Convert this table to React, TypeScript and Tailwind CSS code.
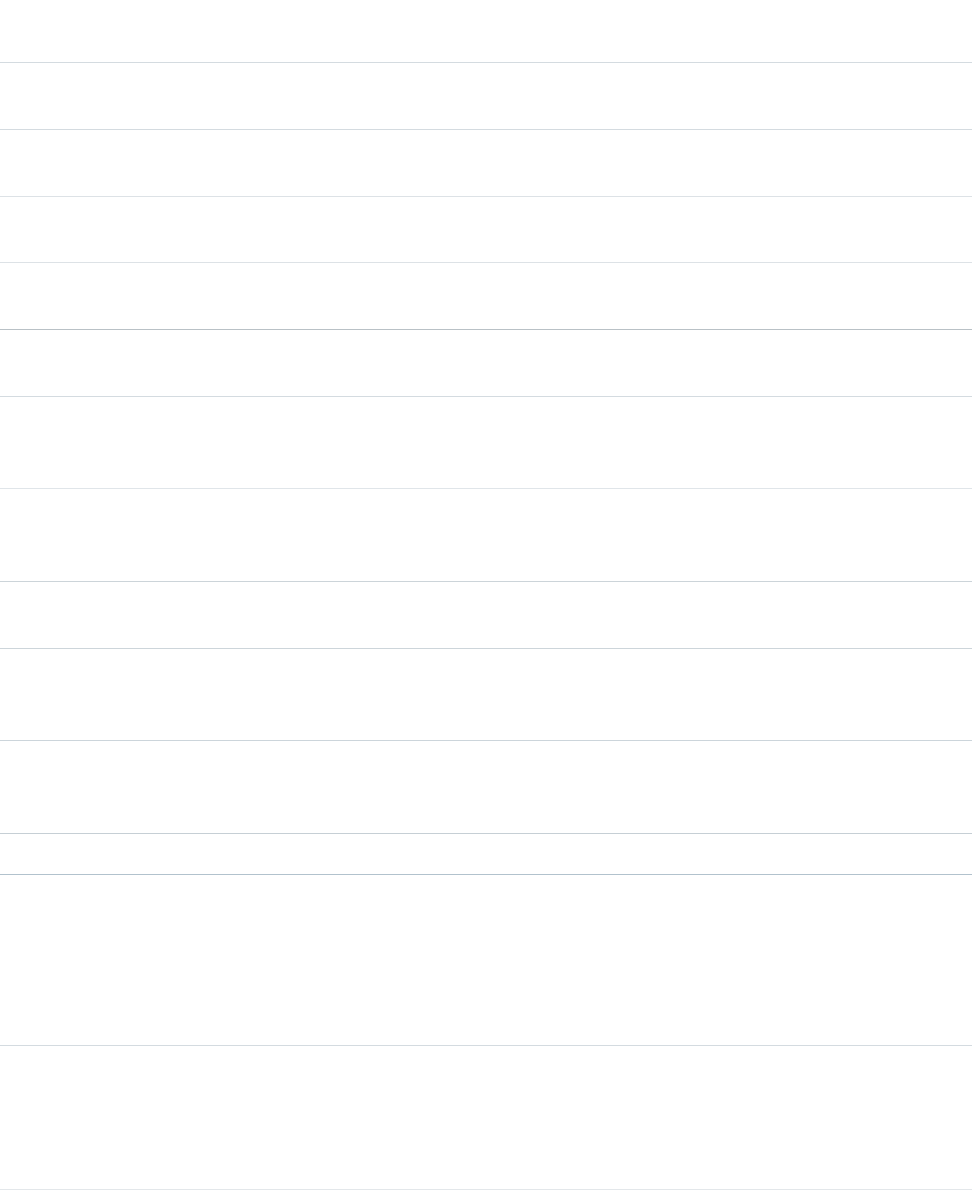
const ROWS = [
  { h: "h-[63px]", line: "border-[#d4dbe0]" },
  { h: "h-[67px]", line: "border-[#d4dbe0]" },
  { h: "h-[67px]", line: "border-[#dde2e6]" },
  { h: "h-[66px]", line: "border-[#dde2e6]" },
  { h: "h-[67px]", line: "border-[#b9c1c6]" },
  { h: "h-[67px]", line: "border-[#d4dbe0]" },
  { h: "h-[92px]", line: "border-[#e0e5e9]" },
  { h: "h-[93px]", line: "border-[#ccd4d9]" },
  { h: "h-[67px]", line: "border-[#cdd5da]" },
  { h: "h-[92px]", line: "border-[#ccd5db]" },
  { h: "h-[93px]", line: "border-[#c6cfd5]" },
  { h: "h-[41px]", line: "border-[#b2c2cd]" },
  { h: "h-[171px]", line: "border-[#d4dbe0]" },
  { h: "h-[144px]", line: "border-[#e3e7ea]" },
];

export default function App() {
  return (
    <div className="min-h-screen bg-white font-['Liberation_Sans',sans-serif]">
      <div className="flex w-[972px] flex-col">
        {ROWS.map((row, i) => (
          <div key={i} className={`${row.h} border-b ${row.line}`} />
        ))}
      </div>
    </div>
  );
}
